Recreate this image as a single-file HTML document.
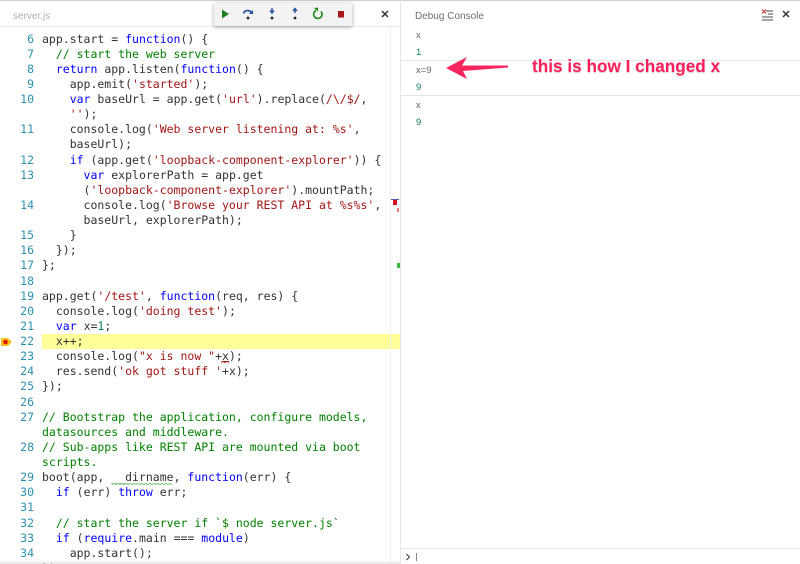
<!DOCTYPE html>
<html><head><meta charset="utf-8"><style>
html,body{margin:0;padding:0;width:800px;height:564px;overflow:hidden;background:#fff}
#r{position:relative;width:800px;height:564px;overflow:hidden;background:#fff;font-family:"Liberation Sans",sans-serif;filter:blur(.35px)}
.a{position:absolute}
#code{position:absolute;left:0;top:16.4px;width:388px;font:11.5px/15.14px "DejaVu Sans Mono","Liberation Mono",monospace;color:#333}
.l{position:relative;height:15.14px;white-space:pre;padding-left:42px}
.l i{position:absolute;left:0;width:34px;text-align:right;font-style:normal;color:#2b91af}
.k{color:#0000ff}.s{color:#a31515}.c{color:#008000}.n{color:#098658}
.con{position:absolute;left:416px;font-size:9.5px;line-height:12px;color:#666}
.g{color:#0f7f5f}
</style></head><body><div id="r">
<div class="a" style="left:42px;top:334px;width:358px;height:15px;background:#ffff99"></div>
<div id="code">
<div class="l"><i>5</i></div>
<div class="l"><i>6</i>app.start = <span class="k">function</span>() {</div>
<div class="l"><i>7</i>  <span class="c">// start the web server</span></div>
<div class="l"><i>8</i>  <span class="k">return</span> app.listen(<span class="k">function</span>() {</div>
<div class="l"><i>9</i>    app.emit(<span class="s">'started'</span>);</div>
<div class="l"><i>10</i>    <span class="k">var</span> baseUrl = app.get(<span class="s">'url'</span>).replace(<span class="s">/\/$/</span>,</div>
<div class="l">    <span class="s">''</span>);</div>
<div class="l"><i>11</i>    console.log(<span class="s">'Web server listening at: %s'</span>,</div>
<div class="l">    baseUrl);</div>
<div class="l"><i>12</i>    <span class="k">if</span> (app.get(<span class="s">'loopback-component-explorer'</span>)) {</div>
<div class="l"><i>13</i>      <span class="k">var</span> explorerPath = app.get</div>
<div class="l">      (<span class="s">'loopback-component-explorer'</span>).mountPath;</div>
<div class="l"><i>14</i>      console.log(<span class="s">'Browse your REST API at %s%s'</span>,</div>
<div class="l">      baseUrl, explorerPath);</div>
<div class="l"><i>15</i>    }</div>
<div class="l"><i>16</i>  });</div>
<div class="l"><i>17</i>};</div>
<div class="l"><i>18</i></div>
<div class="l"><i>19</i>app.get(<span class="s">'/test'</span>, <span class="k">function</span>(req, res) {</div>
<div class="l"><i>20</i>  console.log(<span class="s">'doing test'</span>);</div>
<div class="l"><i>21</i>  <span class="k">var</span> x=<span class="n">1</span>;</div>
<div class="l"><i>22</i>  x++;</div>
<div class="l"><i>23</i>  console.log(<span class="s">"x is now "</span>+<u>x</u>);</div>
<div class="l"><i>24</i>  res.send(<span class="s">'ok got stuff '</span>+x);</div>
<div class="l"><i>25</i>});</div>
<div class="l"><i>26</i></div>
<div class="l"><i>27</i><span class="c">// Bootstrap the application, configure models,</span></div>
<div class="l"><span class="c">datasources and middleware.</span></div>
<div class="l"><i>28</i><span class="c">// Sub-apps like REST API are mounted via boot</span></div>
<div class="l"><span class="c">scripts.</span></div>
<div class="l"><i>29</i>boot(app, __dirname, <span class="k">function</span>(err) {</div>
<div class="l"><i>30</i>  <span class="k">if</span> (err) <span class="k">throw</span> err;</div>
<div class="l"><i>31</i></div>
<div class="l"><i>32</i>  <span class="c">// start the server if `$ node server.js`</span></div>
<div class="l"><i>33</i>  <span class="k">if</span> (<span class="k">require</span>.main === <span class="k">module</span>)</div>
<div class="l"><i>34</i>    app.start();</div>
<div class="l">});</div>
</div>
<svg class="a" style="left:112px;top:483px" width="62" height="3"><path d="M0 1.5l2-1 2 1 2-1 2 1 2-1 2 1 2-1 2 1 2-1 2 1 2-1 2 1 2-1 2 1 2-1 2 1 2-1 2 1 2-1 2 1 2-1 2 1 2-1 2 1 2-1 2 1 2-1 2 1 2-1 2 1" fill="none" stroke="#5cb85c" stroke-width=".8"/></svg>
<svg class="a" style="left:221px;top:361px" width="9" height="3"><path d="M0 1.500l2-1 2 1 2-1 2 1" fill="none" stroke="#e51400" stroke-width=".8"/></svg>
<!-- header -->
<div class="a" style="left:0;top:0;width:800px;height:26px;background:#fff"></div>
<div class="a" style="left:0;top:26px;width:400px;height:1px;background:#ececec"></div>
<div class="a" style="left:0;top:0;width:800px;height:1px;background:#cfcfcf"></div>
<div class="a" style="left:13px;top:11px;font-size:10px;line-height:12px;color:#b0b0b0">server.js</div>
<div class="a" style="left:415px;top:10px;font-size:10px;line-height:13px;color:#6f6f6f">Debug Console</div>
<!-- ruler -->
<div class="a" style="left:390px;top:27px;width:1px;height:537px;background:#f0f0f0"></div>
<div class="a" style="left:400px;top:0;width:1px;height:564px;background:#e6e6e6"></div>
<div class="a" style="left:391px;top:199px;width:8px;height:1px;background:#5555aa"></div>
<div class="a" style="left:393px;top:200px;width:4px;height:5px;background:#d01020"></div>
<div class="a" style="left:397px;top:208px;width:2px;height:4px;background:#f77"></div>
<div class="a" style="left:397px;top:263px;width:3px;height:5px;background:#3cb33c"></div>
<!-- breakpoint -->
<svg class="a" style="left:0;top:337px" width="13" height="10"><path d="M1 1h7l4 4-4 4H1z" fill="#f4c01e"/><circle cx="5.500" cy="5" r="2.300" fill="#e51400"/></svg>
<!-- toolbar -->
<div class="a" style="left:214px;top:3px;width:138px;height:23px;background:#f3f3f3;box-shadow:0 1px 4px rgba(0,0,0,.35)"></div>
<svg class="a" style="left:214px;top:3px" width="138" height="23" fill="none">
<path d="M8 6.500l7 4.500-7 4.500z" fill="#1d7f1d"/>
<path d="M29.500 10.500c1-3.500 6-4 8-.8" stroke="#1b4f9c" stroke-width="1.600"/><path d="M39 7v4h-4z" fill="#1b4f9c"/><circle cx="34" cy="15" r="1.400" fill="#222"/>
<path d="M58 5v4M56 7.500l2 2.500 2-2.500" stroke="#1b4f9c" stroke-width="1.400"/><circle cx="58" cy="15" r="1.400" fill="#222"/>
<path d="M81 10V6M79 8l2-2.500L83 8" stroke="#1b4f9c" stroke-width="1.400"/><circle cx="81" cy="15" r="1.400" fill="#222"/>
<path d="M102 7.500a4.200 4.200 0 1 0 5 1" stroke="#1d8a1d" stroke-width="1.600"/><path d="M100 5l4-.5v4z" fill="#1d8a1d"/>
<rect x="124" y="8" width="6" height="6.500" fill="#a61616"/>
</svg>
<!-- close icons -->
<svg class="a" style="left:381px;top:10px" width="8" height="8"><path d="M1 1l6 6M7 1L1 7" stroke="#333" stroke-width="1.500"/></svg>
<svg class="a" style="left:782px;top:10px" width="8" height="8"><path d="M1 1l6 6M7 1L1 7" stroke="#333" stroke-width="1.500"/></svg>
<svg class="a" style="left:761px;top:8px" width="13" height="13"><path d="M5 3h7M7 6h5M1 9h11M1 12h11" stroke="#444"/><path d="M1 1.500l4 4M5 1.500l-4 4" stroke="#d0392b" stroke-width="1.100"/></svg>
<!-- console -->
<div class="con" style="top:30px">x</div>
<div class="con g" style="top:47px">1</div>
<div class="a" style="left:401px;top:60px;width:399px;height:1px;background:#e8e8e8"></div>
<div class="con" style="top:65px">x=9</div>
<div class="con g" style="top:82px">9</div>
<div class="a" style="left:401px;top:95px;width:399px;height:1px;background:#e4e4e4"></div>
<div class="con" style="top:100px">x</div>
<div class="con g" style="top:117px">9</div>
<!-- input -->
<div class="a" style="left:401px;top:548px;width:399px;height:1px;background:#e4e4e4"></div>
<svg class="a" style="left:405px;top:553px" width="14" height="9"><path d="M1.500 1l3 3-3 3" fill="none" stroke="#444" stroke-width="1.100"/><path d="M11.500 0v8" stroke="#888"/></svg>
<div class="a" style="left:0;top:560px;width:400px;height:4px;background:linear-gradient(rgba(255,255,255,0),rgba(225,225,225,.8))"></div>
<!-- annotation -->
<svg class="a" style="left:440px;top:50px" width="80" height="36"><path d="M6 18L27 7 22 15.500 68 15.500 68 17.500 23 21 27 29z" fill="#f7245f"/></svg>
<div class="a" style="left:532px;top:56px;font-size:17.2px;line-height:20px;font-weight:bold;color:#fd1f5c;white-space:nowrap;text-shadow:0 1px 1px rgba(0,0,0,.2)">this is how I changed x</div>
</div></body></html>
